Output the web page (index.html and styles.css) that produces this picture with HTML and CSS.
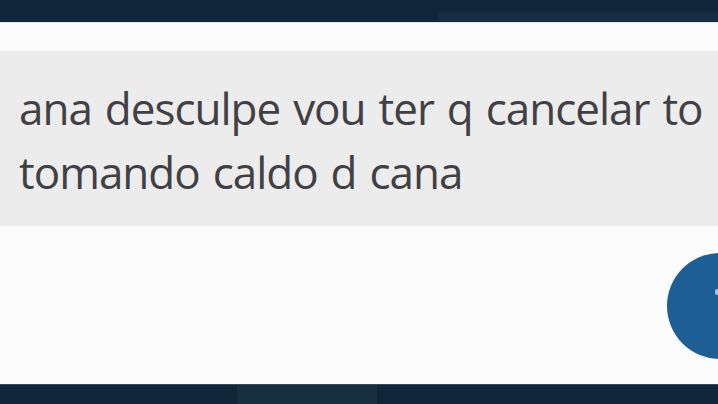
FILE: index.html
```html
<!DOCTYPE html>
<html lang="pt">
<head>
    <meta charset="UTF-8">
    <meta name="viewport" content="width=device-width, initial-scale=1.0">
    <title>Mensagem</title>
    <link rel="stylesheet" href="styles.css">
</head>
<body>
    <div class="top-bar"><span class="top-glow"></span></div>
    <main class="chat">
        <div class="message">
            <p>ana desculpe vou ter q cancelar to</p>
            <p>tomando caldo d cana</p>
        </div>
        <button class="fab" aria-label="enviar">
            <span class="fab-mark"></span>
        </button>
    </main>
    <div class="bottom-bar"><span class="bottom-glow"></span></div>
</body>
</html>
```

FILE: styles.css
```css
* {
    margin: 0;
    padding: 0;
    box-sizing: border-box;
}
html, body {
    width: 718px;
    height: 404px;
    overflow: hidden;
}
body {
    font-family: "Open Sans", "Noto Sans", sans-serif;
    background-color: #11253a;
    display: flex;
    flex-direction: column;
}
.top-bar {
    height: 22px;
    background-color: #11253a;
    display: flex;
    justify-content: flex-end;
    align-items: flex-end;
}
.top-glow {
    width: 280px;
    height: 10px;
    background-color: #172c40;
}
.chat {
    position: relative;
    flex: 1;
    background-color: #fbfbfc;
    padding-top: 28px;
    border-top: 1px solid #dfe9ef;
    overflow: hidden;
}
.message {
    background-color: #ececec;
    height: 175px;
    padding: 25px 0 0 19px;
    color: #414145;
    font-size: 44px;
    line-height: 64px;
    white-space: nowrap;
    letter-spacing: -1px;
    word-spacing: 2.5px;
}
.fab {
    position: absolute;
    left: 667px;
    top: 230px;
    width: 106px;
    height: 106px;
    border: none;
    border-radius: 50%;
    background-color: #1d5e95;
}
.fab-mark {
    position: absolute;
    left: 48px;
    top: 36px;
    width: 4px;
    height: 6px;
    border-radius: 2px;
    background-color: #9cc3df;
}
.bottom-bar {
    height: 20px;
    background-color: #10243a;
    border-top: 1px solid #3a4a58;
    display: flex;
    padding-left: 237px;
}
.bottom-glow {
    width: 140px;
    height: 100%;
    background-color: #16303f;
}
```
